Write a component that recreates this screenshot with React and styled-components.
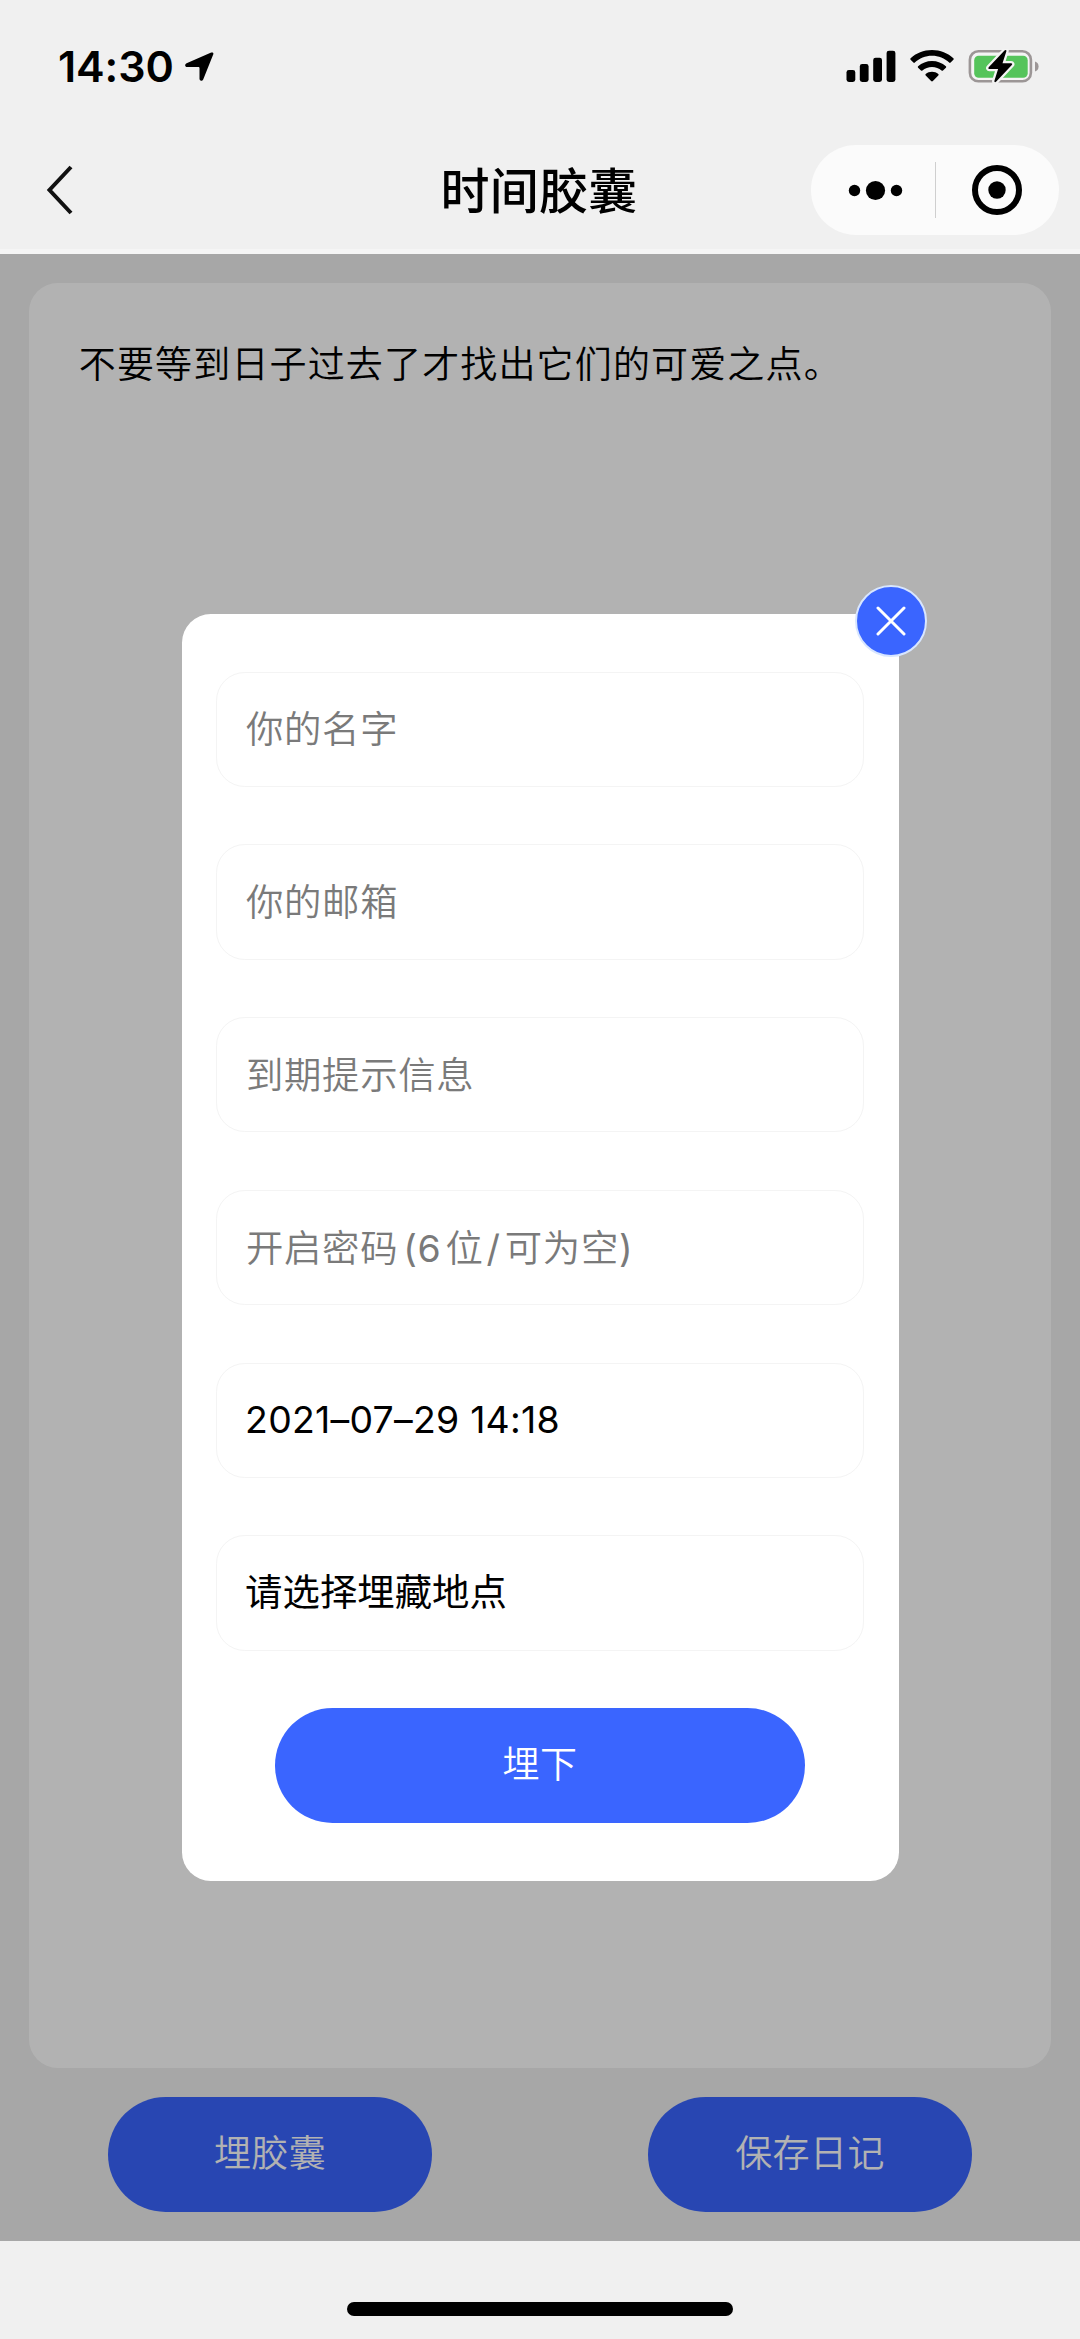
import React from 'react';
import styled, { createGlobalStyle } from 'styled-components';

const GlobalStyle = createGlobalStyle`
  * { box-sizing: border-box; }
  html, body { margin: 0; padding: 0; }
  body {
    background: #f0f0f0;
    font-family: Inter, "Noto Sans CJK SC", sans-serif;
    font-weight: 350;
    color: #000;
  }
`;

const Screen = styled.div`
  width: 1080px;
  height: 2339px;
  display: flex;
  flex-direction: column;
  overflow: hidden;
  background: #f0f0f0;
`;

const StatusBar = styled.header`
  height: 127px;
  padding: 0 41px 0 58px;
  display: flex;
  justify-content: space-between;
  align-items: flex-start;
`;

const Clock = styled.div`
  display: flex;
  align-items: flex-start;
  gap: 11px;
  padding-top: 40px;
  font-size: 43px;
  line-height: 52px;
  font-weight: 600;
  letter-spacing: -0.1px;
  svg { margin-top: 12px; }
`;

const Indicators = styled.div`
  display: flex;
  gap: 14px;
  padding-top: 49px;
`;

const NavBar = styled.nav`
  height: 127px;
  display: grid;
  grid-template-columns: 1fr auto 1fr;
  align-items: center;
  padding: 0 21px;
  border-bottom: 5px solid #f5f5f5;
`;

const BackButton = styled.div`
  display: flex;
  margin: 3px 0 0 25px;
`;

const Title = styled.h1`
  margin: 8px 0 0 -2px;
  font-size: 49px;
  line-height: 60px;
  font-weight: 500;
  letter-spacing: 0.2px;
`;

const Capsule = styled.div`
  justify-self: end;
  width: 248px;
  height: 90px;
  margin-top: 4px;
  border-radius: 45px;
  background: #fbfbfb;
  display: flex;
  align-items: center;
`;

const CapsuleAction = styled.div`
  width: 124px;
  height: 56px;
  display: flex;
  align-items: center;
  justify-content: center;
  padding: ${(p) => (p.$divided ? '0 2px 0 0' : '0 0 0 5px')};
  border-left: ${(p) => (p.$divided ? '1px solid #cfcfcf' : '0')};
`;

const Page = styled.main`
  position: relative;
  height: 1987px;
  padding: 28.8px;
  display: flex;
  flex-direction: column;
  gap: 28.8px;
`;

const DiaryCard = styled.section`
  flex: 1;
  border-radius: 28.8px;
  background: #fff;
  padding: 55px 50px;
  font-size: 37px;
  line-height: 54px;
  letter-spacing: 1.15px;
`;

const Actions = styled.div`
  display: flex;
  justify-content: space-around;
  margin: 0 -28.8px;
`;

const PillButton = styled.button`
  width: ${(p) => p.$width};
  height: 115.2px;
  padding: 0 0 1px;
  border: 0;
  border-radius: 57.6px;
  background: #3a65ff;
  color: #fff;
  font: inherit;
  font-size: 37px;
  line-height: 54px;
  letter-spacing: 0.4px;
`;

const Overlay = styled.div`
  position: absolute;
  inset: 0;
  background: rgba(0, 0, 0, 0.3);
  display: flex;
  align-items: center;
  justify-content: center;
`;

const Dialog = styled.form`
  position: relative;
  width: 717px;
  padding: 57.6px 34.6px;
  border-radius: 28.8px;
  background: #fff;
  display: flex;
  flex-direction: column;
  align-items: center;
  gap: 57.6px;
`;

const Field = styled.div`
  width: 100%;
  height: 115.2px;
  padding: ${(p) => (p.$filled ? '0 28.8px 1px 28px' : '2px 28.8px 0')};
  border: 1.5px solid #f4f4f4;
  border-radius: 28.8px;
  display: flex;
  align-items: center;
  white-space: pre;
  font-size: 37.4px;
  line-height: 54px;
  font-weight: ${(p) => (p.$filled ? 400 : 'inherit')};
  color: ${(p) => (p.$filled ? '#000' : '#7a7a7a')};
  letter-spacing: ${(p) => p.$tracking || '0'};
`;

const Spaced = styled.span`
  margin: 0 ${(p) => p.$after}px 0 ${(p) => p.$before}px;
  font-weight: 400;
`;

const CloseButton = styled.button`
  position: absolute;
  top: -29px;
  right: -28px;
  width: 72px;
  height: 72px;
  padding: 0;
  border: 2px solid #d8e6ff;
  border-radius: 50%;
  background: #3a65ff;
  display: flex;
  align-items: center;
  justify-content: center;
`;

const HomeArea = styled.footer`
  flex: 1;
  display: flex;
  justify-content: center;
  align-items: flex-start;
  padding-top: 61px;
`;

const HomeIndicator = styled.div`
  width: 386px;
  height: 14px;
  border-radius: 7px;
  background: #000;
`;

const LocationIcon = () => (
  <svg width="29" height="30" viewBox="0 0 29 30">
    <path d="M1.6 11.2 26.2.6c1.6-.6 2.7.5 2 2L18.2 27.4c-.9 2.1-3.7 1.7-3.7-.6V16.2c0-.8-.4-1.2-1.200-1.200H2.200C-.2 15-.6 12.200 1.600 11.200Z" />
  </svg>
);

const SignalIcon = () => (
  <svg width="50" height="34" viewBox="0 0 50 34">
    <rect x="0.5" y="21" width="8.8" height="12" rx="2.4" />
    <rect x="13.8" y="15" width="8.8" height="18" rx="2.4" />
    <rect x="27.2" y="8.7" width="8.8" height="24.3" rx="2.4" />
    <rect x="40.6" y="1.7" width="8.8" height="31.3" rx="2.4" />
  </svg>
);

const WifiIcon = () => (
  <svg width="44" height="34" viewBox="0 0 44 34">
    <path d="M22 1C13.7 1 6 4.2.6 9.3c-.5.5-.5 1 0 1.5l2.800 2.800c.4.4 1 .4 1.400 0C9.400 9.300 15.400 6.800 22 6.800s12.600 2.500 17.200 6.800c.4.4 1 .4 1.400 0l2.800-2.800c.5-.5.5-1 0-1.500C38 4.200 30.300 1 22 1Z" />
    <path d="M22 11.9c-5.300 0-10.200 2-13.900 5.300-.5.5-.5 1 0 1.500l2.900 2.800c.4.4.9.4 1.400 0 2.600-2.300 6-3.600 9.600-3.600s7 1.300 9.600 3.600c.5.4 1 .4 1.400 0l2.900-2.800c.5-.5.5-1 0-1.500-3.700-3.300-8.600-5.300-13.900-5.300Z" />
    <path d="M22 22.8c-2.400 0-4.600.8-6.300 2.200-.5.5-.5 1 0 1.500l5.400 5.500c.6.6 1.200.6 1.800 0l5.400-5.500c.5-.5.5-1 0-1.500-1.700-1.400-3.900-2.200-6.300-2.200Z" />
  </svg>
);

const BatteryIcon = () => (
  <svg width="71" height="34" viewBox="0 0 71 34">
    <rect x="1.9" y="2.3" width="61" height="30" rx="8.5" fill="#f4f4f4" stroke="#9c9696" strokeWidth="2.6" />
    <path d="M67 12.5c2.300.8 3.600 2.500 3.600 5s-1.300 4.200-3.600 5Z" fill="#9c9696" />
    <rect x="6.2" y="6.700" width="53.500" height="22" rx="4.500" fill="#55c45b" />
    <path
      d="M36.5 1.6 20.7 18.2c-.8.9-.4 1.700.7 1.700h8.700l-3.600 11.600c-.5 1.700.7 2.200 1.800 1L43.800 16c.8-.9.4-1.700-.7-1.700h-8.600L38.300 2.500c.5-1.500-.7-2.100-1.800-.9Z"
      fill="#000"
      stroke="#f4f4f4"
      strokeWidth="4.6"
      paintOrder="stroke"
    />
  </svg>
);

const BackIcon = () => (
  <svg width="28" height="50" viewBox="0 0 28 50">
    <path d="M25 2 3.5 25 25 48" fill="none" stroke="#111" strokeWidth="4" />
  </svg>
);

const MoreIcon = () => (
  <svg width="56" height="22" viewBox="0 0 56 22">
    <circle cx="6.5" cy="11.5" r="5.7" />
    <circle cx="27.500" cy="11.500" r="9.600" />
    <circle cx="48.500" cy="11.500" r="5.700" />
  </svg>
);

const TargetIcon = () => (
  <svg width="52" height="52" viewBox="0 0 52 52">
    <circle cx="26" cy="26" r="22" fill="none" stroke="#000" strokeWidth="6" />
    <circle cx="26" cy="26" r="8.7" />
  </svg>
);

const CloseIcon = () => (
  <svg width="30" height="30" viewBox="0 0 30 30">
    <path d="M2 2 28 28M28 2 2 28" stroke="#fff" strokeWidth="3" strokeLinecap="round" />
  </svg>
);

export default function App() {
  return (
    <Screen>
      <GlobalStyle />
      <StatusBar>
        <Clock>
          14:30
          <LocationIcon />
        </Clock>
        <Indicators>
          <SignalIcon />
          <WifiIcon />
          <BatteryIcon />
        </Indicators>
      </StatusBar>
      <NavBar>
        <BackButton>
          <BackIcon />
        </BackButton>
        <Title>时间胶囊</Title>
        <Capsule>
          <CapsuleAction>
            <MoreIcon />
          </CapsuleAction>
          <CapsuleAction $divided>
            <TargetIcon />
          </CapsuleAction>
        </Capsule>
      </NavBar>
      <Page>
        <DiaryCard>不要等到日子过去了才找出它们的可爱之点。</DiaryCard>
        <Actions>
          <PillButton $width="324px">埋胶囊</PillButton>
          <PillButton $width="324px">保存日记</PillButton>
        </Actions>
        <Overlay>
          <Dialog onSubmit={(e) => e.preventDefault()}>
            <Field $tracking="0.7px">你的名字</Field>
            <Field $tracking="0.7px">你的邮箱</Field>
            <Field $tracking="0.7px">到期提示信息</Field>
            <Field $tracking="0.7px">
              开启密码
              <Spaced $before={5} $after={4}>(6</Spaced>
              位
              <Spaced $before={3} $after={4}>/</Spaced>
              可为空
              <Spaced $before={0} $after={0}>)</Spaced>
            </Field>
            <Field $filled $tracking="0.25px">2021–07–29 14:18</Field>
            <Field $filled>请选择埋藏地点</Field>
            <PillButton type="submit" $width="530px">埋下</PillButton>
            <CloseButton type="button" aria-label="关闭">
              <CloseIcon />
            </CloseButton>
          </Dialog>
        </Overlay>
      </Page>
      <HomeArea>
        <HomeIndicator />
      </HomeArea>
    </Screen>
  );
}
